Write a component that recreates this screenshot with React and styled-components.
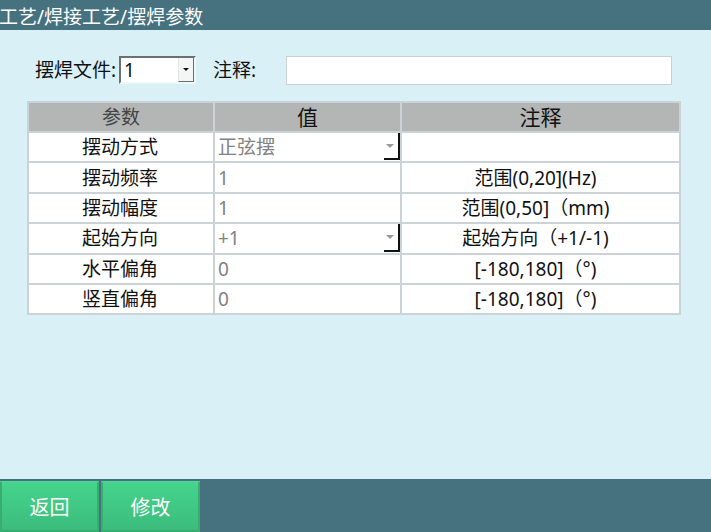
import React from "react";
import styled, { createGlobalStyle } from "styled-components";

const Global = createGlobalStyle`
  html, body { margin: 0; padding: 0; }
  body {
    background: #daf0f7;
    font-family: "Noto Sans", "Noto Sans CJK SC", sans-serif;
  }
`;

const Page = styled.div`
  width: 711px;
  height: 532px;
  display: flex;
  flex-direction: column;
  background: #daf0f7;
  overflow: hidden;
  font-family: "Noto Sans", "Noto Sans CJK SC", sans-serif;
`;

const TitleBar = styled.div`
  height: 30px;
  flex: none;
  background: #46717f;
  color: #ffffff;
  font-size: 19px;
  line-height: 28px;
  padding-top: 3px;
  box-sizing: border-box;
  margin-left: -1px;
  white-space: nowrap;
  overflow: hidden;
`;

const Content = styled.div`
  flex: 1;
  display: flex;
  flex-direction: column;
  padding: 26px 0 0 27px;
`;

const FileRow = styled.div`
  display: flex;
  align-items: center;
  height: 28px;
  padding-left: 8px;
  font-size: 19px;
  color: #111;
`;

const Label = styled.span`
  line-height: 28px;
  width: ${(p) => p.$w}px;
  flex: none;
  white-space: nowrap;
`;

const Combo = styled.div`
  width: 77px;
  height: 28px;
  margin-right: 17px;
  box-sizing: border-box;
  border-top: 2px solid #6b7072;
  border-left: 2px solid #6b7072;
  border-right: 2px solid #eef6f8;
  border-bottom: 2px solid #eef6f8;
  background: #fff;
  display: flex;
  align-items: stretch;
`;

const ComboText = styled.span`
  flex: 1;
  font-size: 19px;
  line-height: 24px;
  padding-left: 3px;
  color: #111;
`;

const ComboButton = styled.span`
  width: 16px;
  box-sizing: border-box;
  background: #f4f6f6;
  border-left: 1px solid #e0e4e5;
  border-right: 1px solid #6b7072;
  border-bottom: 1px solid #6b7072;
  display: flex;
  align-items: center;
  justify-content: center;
`;

const Triangle = styled.span`
  width: 0;
  height: 0;
  border-left: ${(p) => p.$w}px solid transparent;
  border-right: ${(p) => p.$w}px solid transparent;
  border-top: ${(p) => p.$h}px solid ${(p) => p.$color};
`;

const TextInput = styled.div`
  width: 386px;
  height: 29px;
  box-sizing: border-box;
  border: 1px solid #c8d0d4;
  background: #fff;
`;

const Table = styled.div`
  margin-top: 17px;
  width: 654px;
  box-sizing: border-box;
  display: grid;
  grid-template-columns: 184px 185px 1fr;
  grid-template-rows: 28px;
  grid-auto-rows: 28.4px;
  gap: 2px;
  padding: 2px;
  background: #ccd3d7;
`;

const HeadCell = styled.div`
  background: #b3b6b4;
  display: flex;
  align-items: center;
  justify-content: center;
  font-size: ${(p) => (p.$small ? 19 : 21)}px;
  color: ${(p) => (p.$small ? "#444" : "#111")};
  line-height: 28px;
`;

const Cell = styled.div`
  background: #fff;
  display: flex;
  align-items: center;
  justify-content: ${(p) => (p.$left ? "flex-start" : "center")};
  padding-left: ${(p) => (p.$left ? 3 : 0)}px;
  padding-right: ${(p) => p.$pr || 0}px;
  font-size: 19px;
  color: ${(p) => (p.$muted ? "#828282" : "#111")};
  line-height: 28px;
  white-space: nowrap;
`;

const ValueText = styled.span`
  flex: 1;
`;

const DropButton = styled.span`
  align-self: stretch;
  width: 16px;
  margin-bottom: 1px;
  box-sizing: border-box;
  border-right: 2px solid #111;
  border-bottom: 2px solid #111;
  display: flex;
  align-items: center;
  justify-content: center;
  padding-right: 2px;
`;

const BottomBar = styled.div`
  height: 53px;
  flex: none;
  background: #46717f;
  display: flex;
  gap: 2px;
  padding-top: 2px;
  box-sizing: border-box;
`;

const ActionButton = styled.button`
  width: 99px;
  height: 51px;
  border: 2px solid #39ad70;
  border-top-color: #45d690;
  background: linear-gradient(#44d48c, #3cbc7c);
  color: #fff;
  font-family: "Noto Sans CJK SC", sans-serif;
  font-size: 20px;
  padding: 0;
  cursor: pointer;
`;

const rows = [
  { name: "摆动方式", value: "正弦摆", note: "", drop: true },
  { name: "摆动频率", value: "1", note: "范围(0,20](Hz)" },
  { name: "摆动幅度", value: "1", note: "范围(0,50]（mm)" },
  { name: "起始方向", value: "+1", note: "起始方向（+1/-1)", drop: true },
  { name: "水平偏角", value: "0", note: "[-180,180]（°)" },
  { name: "竖直偏角", value: "0", note: "[-180,180]（°)" },
];

export default function App() {
  return (
    <Page>
      <Global />
      <TitleBar>工艺/焊接工艺/摆焊参数</TitleBar>
      <Content>
        <FileRow>
          <Label $w={84}>摆焊文件:</Label>
          <Combo>
            <ComboText>1</ComboText>
            <ComboButton>
              <Triangle $w={3.5} $h={3} $color="#111" />
            </ComboButton>
          </Combo>
          <Label $w={73}>注释:</Label>
          <TextInput />
        </FileRow>
        <Table>
          <HeadCell $small>参数</HeadCell>
          <HeadCell>值</HeadCell>
          <HeadCell>注释</HeadCell>
          {rows.map((r) => (
            <React.Fragment key={r.name}>
              <Cell $pr={2}>{r.name}</Cell>
              <Cell $left $muted>
                <ValueText>{r.value}</ValueText>
                {r.drop && (
                  <DropButton>
                    <Triangle $w={4} $h={4} $color="#9a9a9a" />
                  </DropButton>
                )}
              </Cell>
              <Cell $pr={10}>{r.note}</Cell>
            </React.Fragment>
          ))}
        </Table>
      </Content>
      <BottomBar>
        <ActionButton>返回</ActionButton>
        <ActionButton>修改</ActionButton>
      </BottomBar>
    </Page>
  );
}
